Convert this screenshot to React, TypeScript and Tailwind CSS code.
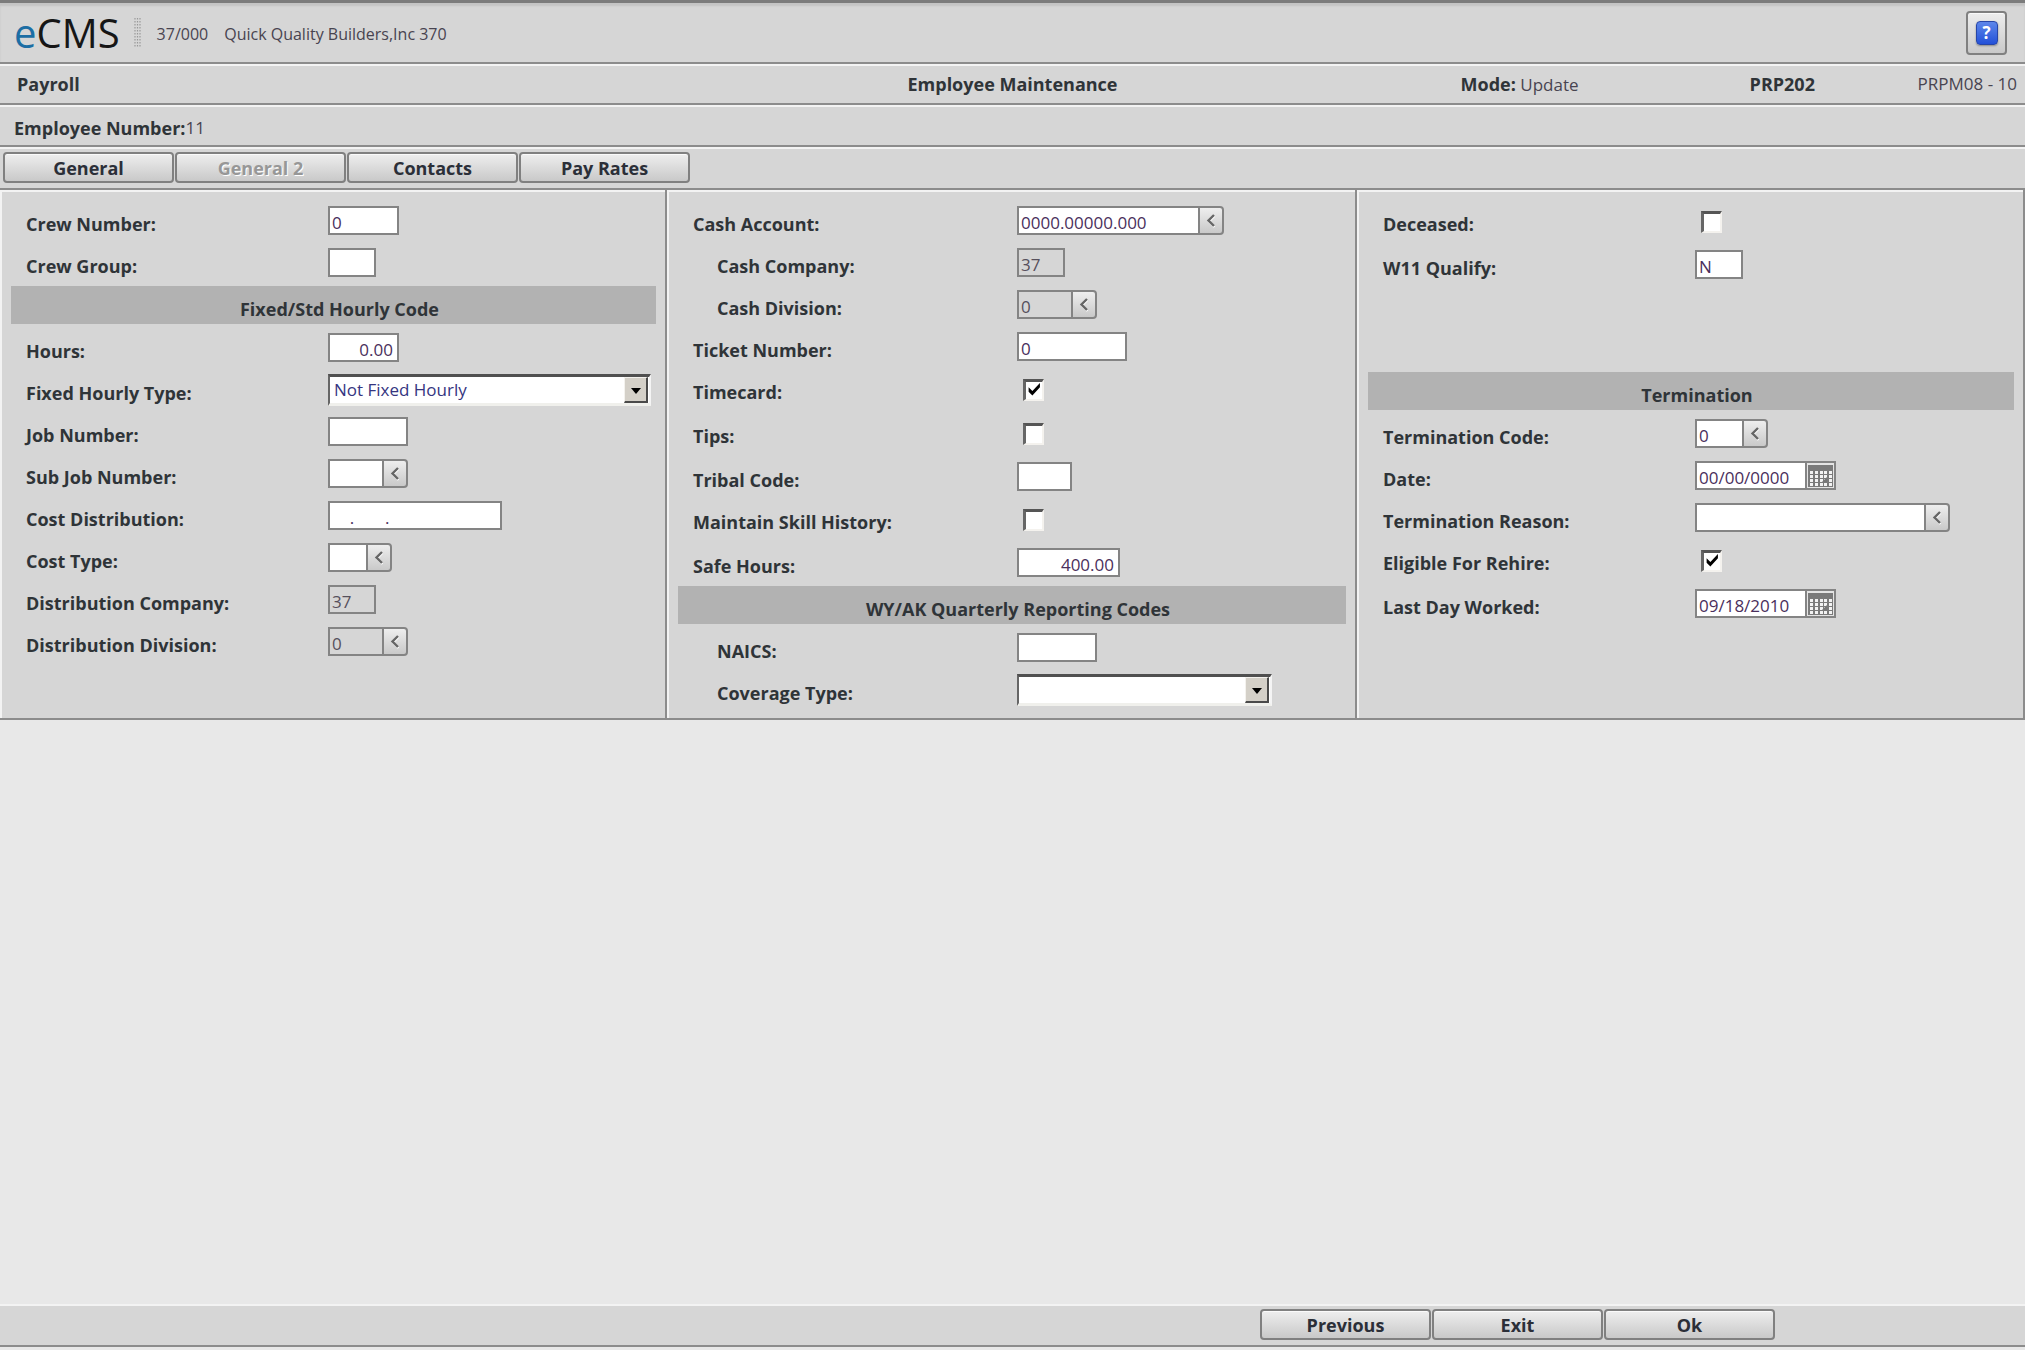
import { useId, type ReactNode } from "react";

const INPUT =
  "h-[29px] border-2 border-[#848484] pt-1 pr-1 pl-0.5 text-[17px] leading-[17px] text-[#4a2f5c] outline-none disabled:bg-[#d6d6d6] disabled:text-[#56505c]";

const BUTTON =
  "rounded border-2 border-[#808080] bg-linear-to-b from-[#eeeeee] to-[#c9c9c9] shadow-[inset_0_1px_0_#fafafa]";

/** Horizontal bar with the etched grey/white edge. */
function Bar({ className, children }: { className: string; children: ReactNode }) {
  return (
    <div
      className={`items-center border-b-2 border-[#8c8c8c] bg-[#d6d6d6] shadow-[inset_0_2px_0_#f3f3f3] ${className}`}
    >
      {children}
    </div>
  );
}

function BarButton({ children, disabled }: { children: ReactNode; disabled?: boolean }) {
  return (
    <button
      type="button"
      disabled={disabled}
      className={`h-[31px] w-[171px] pt-0.5 text-lg leading-[25px] font-bold text-[#2b2f38] disabled:text-[#979797] disabled:[text-shadow:1px_1px_0_#fff] ${BUTTON}`}
    >
      {children}
    </button>
  );
}

function Row({
  label,
  id,
  indent,
  tall,
  children,
}: {
  label: string;
  id: string;
  indent?: boolean;
  tall?: boolean;
  children: ReactNode;
}) {
  return (
    <div className={`flex items-start pl-[26px] ${tall ? "h-11" : "h-[42px]"}`}>
      <label
        htmlFor={id}
        className={`w-(--label) shrink-0 pt-1 text-lg leading-[29px] font-bold whitespace-nowrap ${indent ? "pl-6" : ""}`}
      >
        {label}
      </label>
      <div className={`flex items-center ${tall ? "h-8" : "h-[29px]"}`}>{children}</div>
    </div>
  );
}

function ChevronIcon() {
  return (
    <svg viewBox="0 0 12 14" className="h-3.5 w-3" fill="none">
      <path d="M9.5 2 4 7.5 9.5 13" stroke="#fff" strokeWidth="2" />
      <path d="M9 1 3.5 6.5 9 12" stroke="#666" strokeWidth="2.4" />
    </svg>
  );
}

function CalendarIcon() {
  return (
    <svg viewBox="0 0 25 22" className="h-[22px] w-[25px]">
      <rect width="25" height="22" fill="#7a7a7a" />
      <g fill="#f2f2f2">
        {[6, 10, 14, 18].map((y) =>
          [2, 7, 12, 16, 21].map((x) => <rect key={`${x}-${y}`} x={x} y={y} width="3" height="3" />)
        )}
      </g>
      <path d="M19 12v5h-5z" fill="#777" />
    </svg>
  );
}

type TextProps = {
  label: string;
  width: string;
  value?: string;
  indent?: boolean;
  disabled?: boolean;
  right?: boolean;
  addon?: "lookup" | "calendar";
};

function TextField({ label, width, value = "", indent, disabled, right, addon }: TextProps) {
  const id = useId();
  return (
    <Row label={label} id={id} indent={indent}>
      <input
        id={id}
        type="text"
        defaultValue={value}
        disabled={disabled}
        className={`${INPUT} ${width} ${disabled ? "" : "bg-white"} ${right ? "text-right" : ""} ${addon ? "border-r-0" : ""}`}
      />
      {addon === "lookup" && (
        <button
          type="button"
          aria-label={`Look up ${label}`}
          className="flex h-[29px] w-[26px] items-center justify-center rounded-r border-2 border-[#848484] bg-linear-to-b from-[#eeeeee] to-[#c9c9c9]"
        >
          <ChevronIcon />
        </button>
      )}
      {addon === "calendar" && (
        <button
          type="button"
          aria-label={`Pick ${label}`}
          className="flex h-[29px] w-[31px] items-center justify-center border-2 border-[#848484] bg-[#e4e4e4]"
        >
          <CalendarIcon />
        </button>
      )}
    </Row>
  );
}

function CheckField({ label, checked }: { label: string; checked?: boolean }) {
  const id = useId();
  return (
    <Row label={label} id={id} tall>
      <span className="relative ml-1.5 block h-[22px] w-[21px]">
        <input
          id={id}
          type="checkbox"
          defaultChecked={checked}
          className="peer block h-[22px] w-[21px] appearance-none border-t-3 border-r-2 border-b-2 border-l-3 border-t-[#555] border-r-[#f4f2ee] border-b-[#f4f2ee] border-l-[#666] bg-white"
        />
        <svg
          viewBox="0 0 13 13"
          className="pointer-events-none absolute top-[3px] left-[4px] hidden h-[15px] w-[14px] peer-checked:block"
        >
          <path d="M1.5 4.5v4L5 12l7-7.5v-4L5 8z" fill="#000" />
        </svg>
      </span>
    </Row>
  );
}

function SelectField({
  label,
  width,
  options,
  indent,
}: {
  label: string;
  width: string;
  options: string[];
  indent?: boolean;
}) {
  const id = useId();
  return (
    <Row label={label} id={id} indent={indent}>
      <div className={`relative ${width}`}>
        <select
          id={id}
          className="block h-8 w-full appearance-none border-t-3 border-r-2 border-b-3 border-l-2 border-t-[#505050] border-r-[#f4f4f4] border-b-[#f0f0ec] border-l-[#666] bg-white px-1 text-[17px] leading-[24px] text-[#35357f] outline-none"
        >
          {options.map((option) => (
            <option key={option}>{option}</option>
          ))}
        </select>
        <span className="pointer-events-none absolute top-[3px] right-[3px] flex h-[26px] w-6 items-center justify-center border-t border-r-2 border-b-2 border-l border-t-[#f4f2ee] border-r-[#4a4a4a] border-b-[#4a4a4a] border-l-[#f4f2ee] bg-[#d4d0c8]">
          <svg viewBox="0 0 10 6" className="mt-1 h-1.5 w-2.5">
            <path d="M0 0h10L5 6z" fill="#000" />
          </svg>
        </span>
      </div>
    </Row>
  );
}

function SectionHeading({ children }: { children: ReactNode }) {
  return (
    <h2 className="-mt-1 mr-[9px] mb-[9px] ml-[11px] h-[38px] bg-[#b2b2b2] pt-2 pl-3 text-center text-lg leading-[30px] font-bold">
      {children}
    </h2>
  );
}

function Panel({ className, children }: { className: string; children: ReactNode }) {
  return (
    <section
      className={`border-r-2 border-[#8c8c8c] pt-4 pb-px shadow-[inset_2px_2px_0_#f3f3f3] ${className}`}
    >
      {children}
    </section>
  );
}

export default function App() {
  return (
    <div className="flex min-h-screen flex-col bg-[#e8e8e8] font-['Open_Sans','Noto_Sans',sans-serif] text-[17px] text-[#2f3438]">
      <header className="flex h-16 items-center border-t-3 border-b-2 border-t-[#7c7c7c] border-b-[#8c8c8c] bg-[#d6d6d6] pr-[18px] pl-3.5 shadow-[inset_0_3px_2px_#c4c4c4]">
        <h1 className="text-[40px] leading-[56px] text-[#161616]">
          <span className="text-[#1c6ea4]">e</span>CMS
        </h1>
        <svg viewBox="0 0 7 30" className="ml-3.5 h-[30px] w-[7px]">
          {[1, 3.5, 6].map((x) => (
            <path key={x} d={`M${x} 0v30`} stroke="#999" strokeWidth="1.2" strokeDasharray="1.5 1.5" />
          ))}
        </svg>
        <p className="flex gap-4 pt-0.5 pl-4 text-base text-[#484450]">
          <span>37/000</span>
          <span>Quick Quality Builders,Inc 370</span>
        </p>
        <button
          type="button"
          aria-label="Help"
          className={`ml-auto flex h-11 w-[41px] items-center justify-center ${BUTTON}`}
        >
          <span className="flex h-6 w-[22px] items-center justify-center rounded border border-[#2746a8] bg-linear-to-b from-[#5d86ea] to-[#2450d8] text-[17px] leading-[22px] font-bold text-white shadow-[0_1px_2px_#8a8a8a]">
            ?
          </span>
        </button>
      </header>

      <Bar className="grid h-[41px] grid-cols-[1fr_auto_1fr]">
        <span className="pl-[17px] text-lg font-bold">Payroll</span>
        <span className="text-lg font-bold">Employee Maintenance</span>
        <div className="flex items-center justify-end pr-2">
          <p className="w-[289px] text-[#484450]">
            <span className="text-lg font-bold text-[#2f3438]">Mode:</span> Update
          </p>
          <span className="w-[168px] text-lg font-bold">PRP202</span>
          <span className="text-[#484450]">PRPM08 - 10</span>
        </div>
      </Bar>
      <Bar className="flex h-[42px] pt-1.5 pl-3.5">
        <span className="text-lg font-bold">Employee Number:</span>
        <span className="text-[#484450]">11</span>
      </Bar>
      <Bar className="flex h-[43px] gap-px pl-[3px]">
        <BarButton>General</BarButton>
        <BarButton disabled>General 2</BarButton>
        <BarButton>Contacts</BarButton>
        <BarButton>Pay Rates</BarButton>
      </Bar>

      <main className="grid grid-cols-[667fr_690fr_668fr] border-b-2 border-[#8c8c8c] bg-[#d6d6d6]">
        <Panel className="[--label:302px]">
          <TextField label="Crew Number:" width="w-[71px]" value="0" />
          <TextField label="Crew Group:" width="w-12" />
          <SectionHeading>Fixed/Std Hourly Code</SectionHeading>
          <TextField label="Hours:" width="w-[71px]" value="0.00" right />
          <SelectField label="Fixed Hourly Type:" width="w-[323px]" options={["Not Fixed Hourly"]} />
          <TextField label="Job Number:" width="w-20" />
          <TextField label="Sub Job Number:" width="w-[54px]" addon="lookup" />
          <TextField label="Cost Distribution:" width="w-[174px]" value="    .       ." />
          <TextField label="Cost Type:" width="w-[38px]" addon="lookup" />
          <TextField label="Distribution Company:" width="w-12" value="37" disabled />
          <TextField label="Distribution Division:" width="w-[54px]" value="0" disabled addon="lookup" />
        </Panel>

        <Panel className="[--label:324px]">
          <TextField label="Cash Account:" width="w-[181px]" value="0000.00000.000" addon="lookup" />
          <TextField label="Cash Company:" width="w-12" value="37" indent disabled />
          <TextField label="Cash Division:" width="w-[54px]" value="0" indent disabled addon="lookup" />
          <TextField label="Ticket Number:" width="w-[110px]" value="0" />
          <CheckField label="Timecard:" checked />
          <CheckField label="Tips:" />
          <TextField label="Tribal Code:" width="w-[55px]" />
          <CheckField label="Maintain Skill History:" />
          <TextField label="Safe Hours:" width="w-[103px]" value="400.00" right />
          <SectionHeading>WY/AK Quarterly Reporting Codes</SectionHeading>
          <TextField label="NAICS:" width="w-20" indent />
          <SelectField label="Coverage Type:" width="w-[255px]" options={[""]} indent />
        </Panel>

        <Panel className="[--label:312px]">
          <CheckField label="Deceased:" />
          <TextField label="W11 Qualify:" width="w-12" value="N" />
          <div className="h-[84px]" />
          <SectionHeading>Termination</SectionHeading>
          <TextField label="Termination Code:" width="w-[47px]" value="0" addon="lookup" />
          <TextField label="Date:" width="w-[110px]" value="00/00/0000" addon="calendar" />
          <TextField label="Termination Reason:" width="w-[229px]" addon="lookup" />
          <CheckField label="Eligible For Rehire:" checked />
          <TextField label="Last Day Worked:" width="w-[110px]" value="09/18/2010" addon="calendar" />
        </Panel>
      </main>

      <footer className="mt-auto mb-[3px] flex h-[43px] items-center justify-end gap-px border-b-2 border-[#8c8c8c] bg-[#d6d6d6] pr-[250px] shadow-[inset_0_2px_0_#f3f3f3]">
        <BarButton>Previous</BarButton>
        <BarButton>Exit</BarButton>
        <BarButton>Ok</BarButton>
      </footer>
    </div>
  );
}
